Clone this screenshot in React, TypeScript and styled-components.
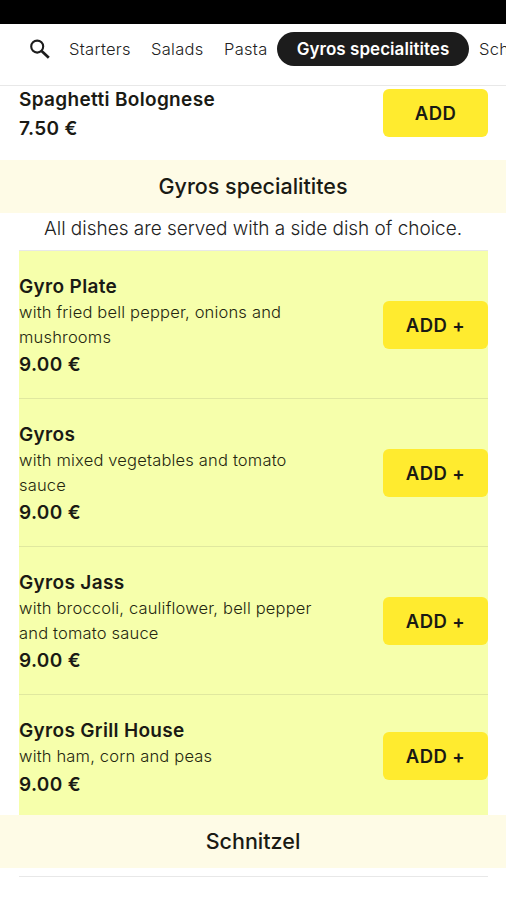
import React from "react";
import styled, { createGlobalStyle } from "styled-components";

const Global = createGlobalStyle`
  *{box-sizing:border-box}
  body{margin:0;background:#fff;font-family:Inter,"Liberation Sans",sans-serif;color:#1a1a14;overflow:hidden}
`;
const Screen = styled.div`width:506px;height:900px;overflow:hidden;background:#fff;`;
const StatusBar = styled.div`height:24px;background:#000;`;
const Nav = styled.nav`
  height:62px;display:flex;align-items:center;padding:0 0 11px 29px;border-bottom:1px solid #e8e8e8;
  overflow:hidden;white-space:nowrap;
`;
const SearchIcon = styled.svg`width:22px;height:22px;flex:none;margin-right:18px;`;
const Tab = styled.span<{ $w: number }>`
  flex:none;width:${p => p.$w}px;font-size:16.5px;font-weight:300;letter-spacing:0.3px;color:#222;
`;
const ActiveTab = styled.span`
  flex:none;width:192px;height:34px;border-radius:17px;background:#1c1c1c;color:#fff;
  font-size:17px;font-weight:600;letter-spacing:0.05px;display:flex;align-items:center;justify-content:center;margin-right:10px;
`;
const Row = styled.section<{ $h: number; $top: number; $plain?: boolean; $line?: boolean }>`
  height:${p => p.$h}px;padding-top:${p => p.$top}px;margin:0 18px 0 19px;display:flex;justify-content:space-between;
  background:${p => (p.$plain ? "#fff" : "#f6ffab")};
  border-bottom:${p => (p.$line ? "1px solid #e0e89f" : "0")};
`;
const Name = styled.div`font-size:19px;font-weight:600;line-height:28px;letter-spacing:0.33px;`;
const Desc = styled.div`
  margin:-1px 0 1px;
  font-size:16.5px;font-weight:300;line-height:24.5px;letter-spacing:0.18px;color:#24260f;white-space:pre-line;
`;
const Price = styled.div`font-size:19px;font-weight:600;line-height:30px;letter-spacing:0.35px;`;
const Add = styled.button<{ $top: number }>`
  width:105px;height:48px;margin-top:${p => p.$top}px;border:0;border-radius:6px;background:#ffeb2f;color:#1a1a14;
  font:600 18.5px Inter,sans-serif;letter-spacing:0.4px;padding:0;
`;
const Heading = styled.h2`
  margin:0;height:53px;padding-bottom:1px;background:#fefbe6;display:flex;align-items:center;justify-content:center;
  font-size:21.5px;font-weight:500;
`;
const Note = styled.p`
  margin:0;height:37px;line-height:32px;text-align:center;font-size:19px;font-weight:300;letter-spacing:-0.02px;color:#222;
`;
const Rule = styled.hr<{ $gap: number }>`
  margin:${p => p.$gap}px 18px 0 19px;border:0;height:1px;background:#e8e8e8;
`;

const dishes = [
  { name: "Gyro Plate", desc: "with fried bell pepper, onions and\nmushrooms", h: 148, top: 22, add: 28, line: true },
  { name: "Gyros", desc: "with mixed vegetables and tomato\nsauce", h: 148, top: 22, add: 28, line: true },
  { name: "Gyros Jass", desc: "with broccoli, cauliflower, bell pepper\nand tomato sauce", h: 148, top: 22, add: 28, line: true },
  { name: "Gyros Grill House", desc: "with ham, corn and peas", h: 120, top: 22, add: 15, line: false },
];

export default function App() {
  return (
    <Screen>
      <Global />
      <StatusBar />
      <Nav>
        <SearchIcon viewBox="0 0 22 22" fill="none" stroke="#1c1c1c">
          <circle cx="8.2" cy="8.6" r="6" strokeWidth="2.1" />
          <path d="M12.6 13l7.2 6.8" strokeWidth="2.7" />
        </SearchIcon>
        <Tab $w={82}>Starters</Tab><Tab $w={73}>Salads</Tab><Tab $w={53}>Pasta</Tab>
        <ActiveTab>Gyros specialitites</ActiveTab><Tab $w={90}>Schnitzel</Tab>
      </Nav>
      <Row $h={74} $top={0} $plain>
        <div><Name>Spaghetti Bolognese</Name><Price>7.50 €</Price></div>
        <Add $top={3}>ADD</Add>
      </Row>
      <Heading>Gyros specialitites</Heading>
      <Note>All dishes are served with a side dish of choice.</Note>
      <Rule $gap={0} />
      {dishes.map(d => (
        <Row key={d.name} $h={d.h} $top={d.top} $line={d.line}>
          <div><Name>{d.name}</Name><Desc>{d.desc}</Desc><Price>9.00 €</Price></div>
          <Add $top={d.add}>ADD +</Add>
        </Row>
      ))}
      <Heading>Schnitzel</Heading>
      <Rule $gap={8} />
    </Screen>
  );
}
